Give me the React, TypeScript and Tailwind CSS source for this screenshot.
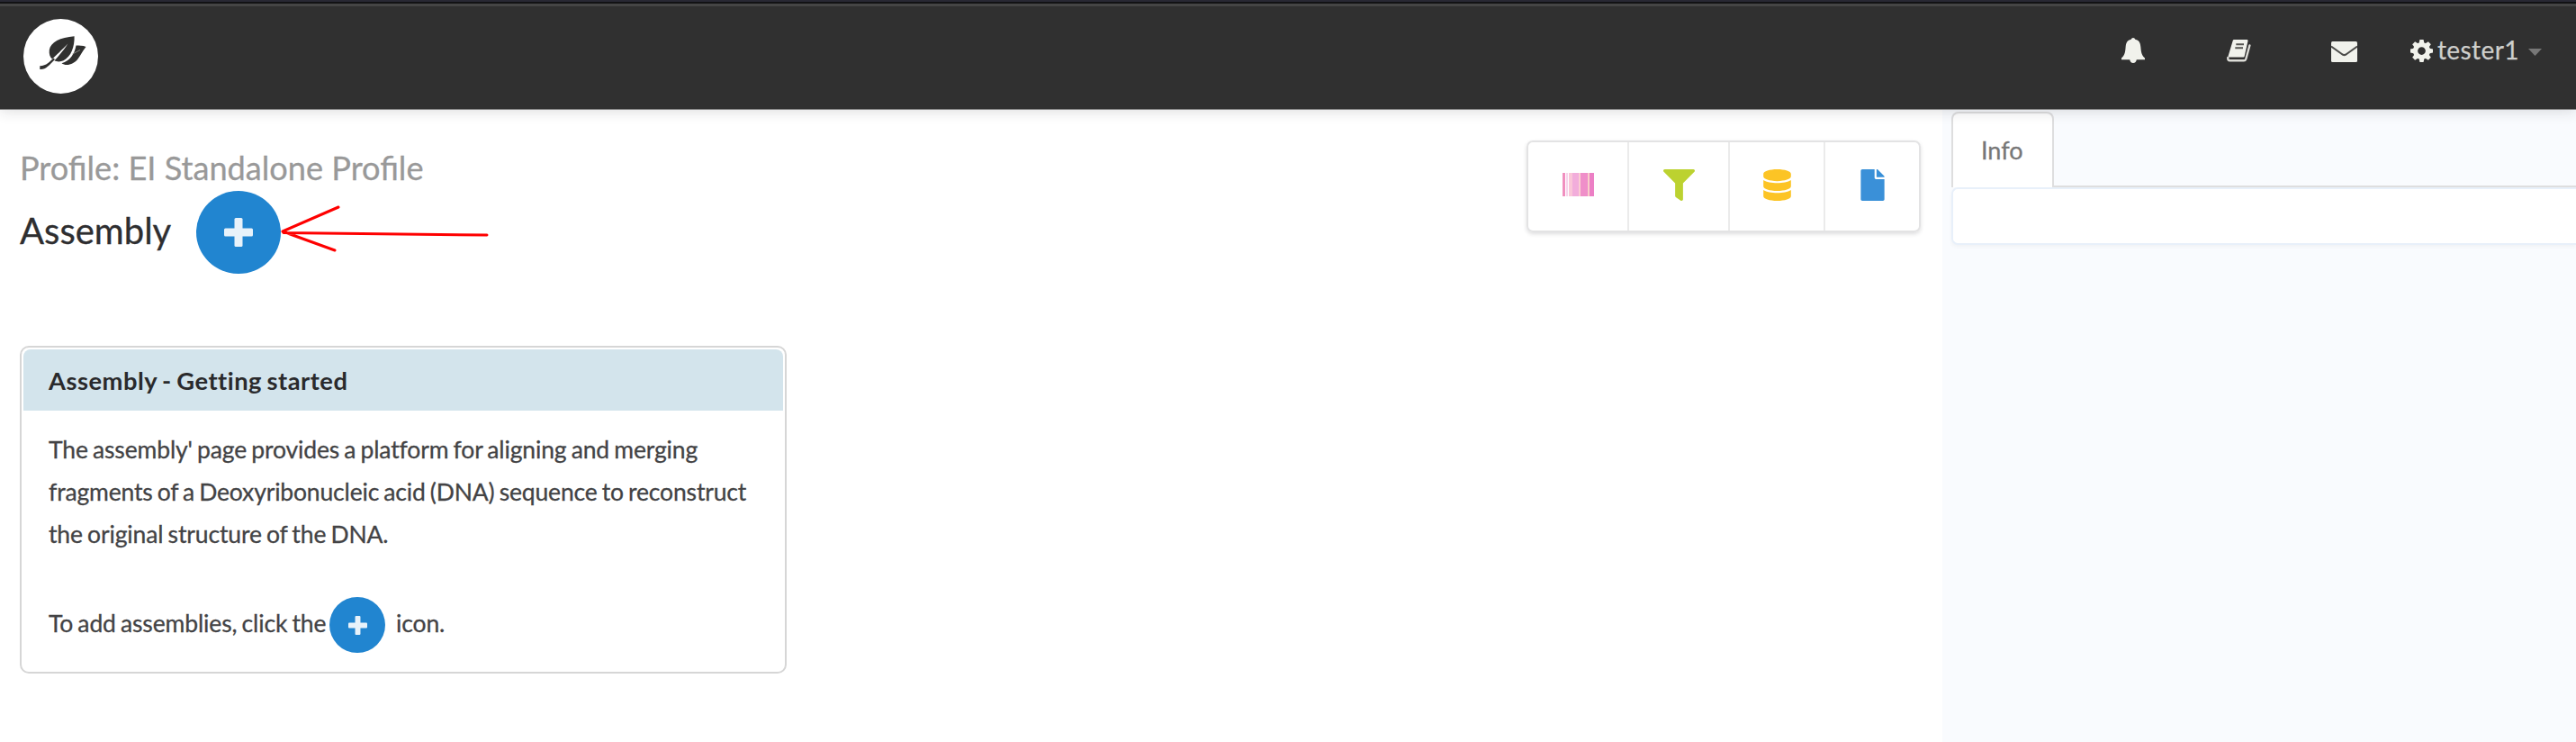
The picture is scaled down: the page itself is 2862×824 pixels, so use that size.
import { FaFilter, FaDatabase, FaFile } from "react-icons/fa";

function Logo() {
  return (
    <svg className="block size-[83px]" viewBox="0 0 83 83">
      <circle cx="41.5" cy="41.5" r="41.5" fill="#fff" />
      <g fill="#30302f">
        <path d="M56.600 19.300C41 20.500 30 26 28.800 34.500C28.300 39 29.500 42.500 32 44.500C36 41 43 34 49.500 27.500C44 35.500 39 41.500 34.500 46.300C37 47.800 41.500 47.800 44.500 46.300C53 42 57 31 56.600 19.300Z" />
        <path d="M58.500 29.500C62 29.800 66 29.300 69.500 31C66 35 64 40 60.500 44.500C56 50.500 47.500 53 42.500 49.300C52 46.500 57 38.500 58.500 29.500Z" />
        <path d="M33.500 43.500C29 47.500 26 52 18.300 52.300V56C25 56.500 28.500 51.500 35 45Z" />
      </g>
      <path d="M63 34.500L54.500 39" stroke="#8d8d89" strokeWidth="0.900" />
    </svg>
  );
}

function Bell() {
  return (
    <svg className="block h-[28px] w-[26px]" viewBox="0 0 26 28" fill="#f1f2ec">
      <path d="M13 0a2.400 2.400 0 0 1 2.300 1.800C19.500 2.700 21 5.500 21.400 10.500C21.800 17 23 20 26 22.600V24.200H16.800C16.500 26.500 15 28 13 28S9.500 26.500 9.200 24.200H0V22.600C3 20 4.200 17 4.600 10.500C5 5.500 6.500 2.700 10.700 1.800A2.400 2.400 0 0 1 13 0Z" />
    </svg>
  );
}

function Book() {
  return (
    <svg className="block h-[25px] w-[27px]" viewBox="0 0 27 25">
      <path d="M8 1.200H22.300L18.500 18.300H2.800Z" fill="#f1f2ec" stroke="#f1f2ec" strokeWidth="2.400" strokeLinejoin="round" />
      <path d="M1.300 20Q1 23.300 3.500 23.300H19Q20.800 23.300 21.300 21.500L25.400 6.500" fill="none" stroke="#dcdcd7" strokeWidth="2.400" strokeLinecap="round" />
      <path d="M10.300 5.300H19M9.300 9.200H18" stroke="#555552" strokeWidth="2" />
    </svg>
  );
}

function Mail() {
  return (
    <svg className="block h-[23px] w-[29px]" viewBox="0 0 29 23">
      <rect width="29" height="23" rx="1.500" fill="#f1f2ec" />
      <path d="M0 5.500L11.500 13.800Q14.500 16.500 17.500 13.800L29 5.500" fill="none" stroke="#4c4c4a" strokeWidth="2" />
    </svg>
  );
}

const teeth = [0, 45, 90, 135, 180, 225, 270, 315];

function Gear() {
  return (
    <svg className="block size-[25px]" viewBox="-12 -12 24 24">
      <circle r="6.700" fill="none" stroke="#f1f2ec" strokeWidth="5" />
      {teeth.map((a) => (
        <path key={a} d="M-2.900-7.500L-2-12H2L2.900-7.500Z" transform={`rotate(${a})`} fill="#f1f2ec" />
      ))}
    </svg>
  );
}

function Barcode() {
  return (
    <svg className="block h-[26px] w-[35px]" viewBox="0 0 35 26">
      <path d="M0 0h3v26H0z" fill="#f08fbf" />
      <path d="M4 0h2v26H4z" fill="#f8d2ec" />
      <path d="M7 0h4v26H7z" fill="#fac6d8" />
      <path d="M11 0h7v26h-7z" fill="#f2addb" />
      <path d="M18 0h2v26h-2z" fill="#fbcdd2" />
      <path d="M20 0h8v26h-8z" fill="#ef8fc9" />
      <path d="M28 0h2v26h-2z" fill="#f8cfc9" />
      <path d="M30 0h5v26h-5z" fill="#ec7fc5" />
    </svg>
  );
}

function Plus({ className }: { className: string }) {
  return (
    <svg className={className} viewBox="0 0 32 32" fill="#e8f2fa">
      <rect x="11.500" width="9" height="32" rx="1.500" />
      <rect y="11.500" width="32" height="9" rx="1.500" />
    </svg>
  );
}

export default function App() {
  return (
    <div className="relative flex h-[824px] w-[2862px] flex-col overflow-hidden bg-white font-['Lato',sans-serif]">
      <header className="relative z-10 flex h-[122px] shrink-0 justify-between border-b border-[#858585] bg-[#303030] pl-[25px] shadow-[0_2px_14px_rgba(34,36,38,0.15)]">
        <div className="pt-[21px] pl-px"><Logo /></div>
        <nav className="flex text-[28px] leading-[34px] text-[#cfcfcc]">
          <div className="w-[117px] pt-[42px]"><Bell /></div>
          <div className="w-[116px] pt-[44px]"><Book /></div>
          <div className="w-[88px] pt-[46px]"><Mail /></div>
          <div className="w-[30px] pt-[44px]"><Gear /></div>
          <div className="w-[101px] pt-[38px] tracking-[0.4px] [-webkit-text-stroke:0.25px]">tester1</div>
          <div className="w-[53px] pt-[54px]">
            <svg className="block h-[8px] w-[15px]" viewBox="0 0 15 8"><path d="M0 0H15L7.500 8Z" fill="#777" /></svg>
          </div>
        </nav>
        <div className="absolute inset-x-0 top-0 flex h-[7px] flex-col">
          <div className="h-[2px] bg-[#282833]" />
          <div className="h-[2px] bg-[#121214]" />
          <div className="h-[3px] bg-[#454545]" />
        </div>
      </header>

      <div className="flex flex-1">
        <main className="w-[2158px] shrink-0 pl-[22px] pr-[24px]">
          <div className="flex justify-between">
            <div className="pt-[43px]">
              <div className="h-[47px] whitespace-nowrap text-[36.15px] leading-[42px] text-[#999] [-webkit-text-stroke:0.3px]">Profile: EI Standalone Profile</div>
              <div className="flex">
                <h1 className="w-[196px] pt-[20px] text-[40px] leading-[48px] text-[#2e2e30] [-webkit-text-stroke:0.3px]">Assembly</h1>
                <div className="flex h-[92px] w-[94px] items-center justify-center rounded-[50%] bg-[#2185d0]">
                  <Plus className="size-[32px]" />
                </div>
              </div>
            </div>
            <div className="mt-[34px] flex h-[102px] w-[438px] rounded-[7px] border-2 border-[#e3e3e4] shadow-[0_2px_4px_rgba(34,36,38,0.15)]">
              <div className="flex w-[112px] items-center justify-center border-r-2 border-[#ebebeb] pb-[4px]"><Barcode /></div>
              <div className="flex w-[112px] items-center justify-center border-r-2 border-[#ebebeb] pb-[4px] text-[#bcd230]"><FaFilter size={35} /></div>
              <div className="flex w-[106px] items-center justify-center border-r-2 border-[#ebebeb] pb-[4px] text-[#fcc425]"><FaDatabase size={35} /></div>
              <div className="flex flex-1 items-center justify-center pb-[4px] text-[#3a90d8]"><FaFile size={35} /></div>
            </div>
          </div>

          <section className="mt-[80px] h-[364px] w-[852px] rounded-[10px] border-2 border-[#d6d6d6] p-[2px]">
            <h2 className="h-[68px] rounded-t-[8px] bg-[#d3e4ec] pl-[28px] pt-[18px] text-[27.3px] font-bold leading-[34px] tracking-[0.5px] text-[#2a2a2c] [word-spacing:-1.5px]">Assembly - Getting started</h2>
            <div className="pl-[28px] pt-[20px] text-[26.5px] leading-[47px] tracking-[-0.13px] text-[#434345] [word-spacing:-1.5px] [-webkit-text-stroke:0.3px]">
              <p>
                <span className="block whitespace-nowrap">The assembly' page provides a platform for aligning and merging</span>
                <span className="block whitespace-nowrap tracking-[-0.16px]">fragments of a Deoxyribonucleic acid (DNA) sequence to reconstruct</span>
                <span className="block whitespace-nowrap">the original structure of the DNA.</span>
              </p>
              <p className="mt-[46px] flex h-[62px] items-center whitespace-nowrap">
                <span className="w-[312px] pb-[3px]">To add assemblies, click the</span>
                <span className="mr-[12px] flex size-[62px] items-center justify-center rounded-full bg-[#2185d0]"><Plus className="size-[21px]" /></span>
                <span className="pb-[3px]">icon.</span>
              </p>
            </div>
          </section>
        </main>

        <aside className="flex-1 bg-[#f9fbfe] pl-[10px] pt-[2px]">
          <div className="flex h-[84px]">
            <div className="w-[114px] rounded-t-[8px] border-2 border-b-0 border-[#dededf] bg-white pl-[31px] pt-[24px] text-[27px] leading-[34px] text-[#777] [-webkit-text-stroke:0.3px]">Info</div>
            <div className="flex-1 border-b-2 border-[#dededf]" />
          </div>
          <div className="h-[64px] rounded-l-[7px] border-2 border-r-0 border-[#e8f0fa] bg-white shadow-[0_2px_4px_rgba(34,36,38,0.04)]" />
        </aside>
      </div>

      <svg className="absolute left-[308px] top-[225px] z-20 h-[58px] w-[240px]" viewBox="308 225 240 58" fill="none" stroke="#fe0000" strokeWidth="3" strokeLinecap="round" strokeLinejoin="round">
        <path d="M541 261L315 258.500L314 257L376 230M314 257L372 278" />
      </svg>
    </div>
  );
}
